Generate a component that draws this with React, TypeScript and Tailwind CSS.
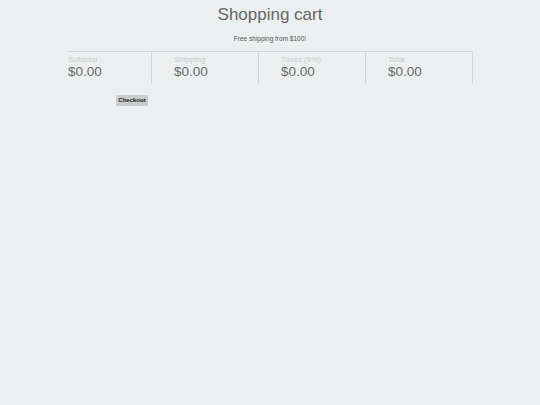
export default function App() {
  const totals = [
    { label: "Subtotal", value: "$0.00" },
    { label: "Shipping", value: "$0.00" },
    { label: "Taxes (6%)", value: "$0.00" },
    { label: "Total", value: "$0.00" },
  ];

  return (
    <div className="min-h-[405px] w-full bg-[#eceff0] font-['Liberation_Sans',Arial,sans-serif] text-[#666]">
      <h1 className="pt-[4px] text-center text-[17px] leading-[22px]">Shopping cart</h1>
      <p className="mt-[8px] text-center text-[6.5px] leading-[9px] text-[#555]">Free shipping from $100!</p>

      <div className="ml-[67px] mt-[8px] flex w-[406px] border-t border-[#d4d7d8]">
        {totals.map((t, i) => (
          <div
            key={t.label}
            className={`flex h-[32px] flex-col border-r border-[#d4d7d8] ${i === 0 ? "w-[85px] pl-[1px]" : "w-[107px] pl-[22px]"}`}
          >
            <span className="mt-[3px] text-[8px] leading-[9px] text-[#c8cbcc]">{t.label}</span>
            <span className="text-[13.5px] leading-[16px] text-[#6a6a6a]">{t.value}</span>
          </div>
        ))}
      </div>

      <div className="ml-[116px] mt-[11px] flex">
        <button
          type="button"
          className="h-[11px] w-[32px] rounded-[1px] bg-[#c9cbcc] text-[6px] leading-[11px] font-semibold text-[#222]"
        >
          Checkout
        </button>
      </div>
    </div>
  );
}
